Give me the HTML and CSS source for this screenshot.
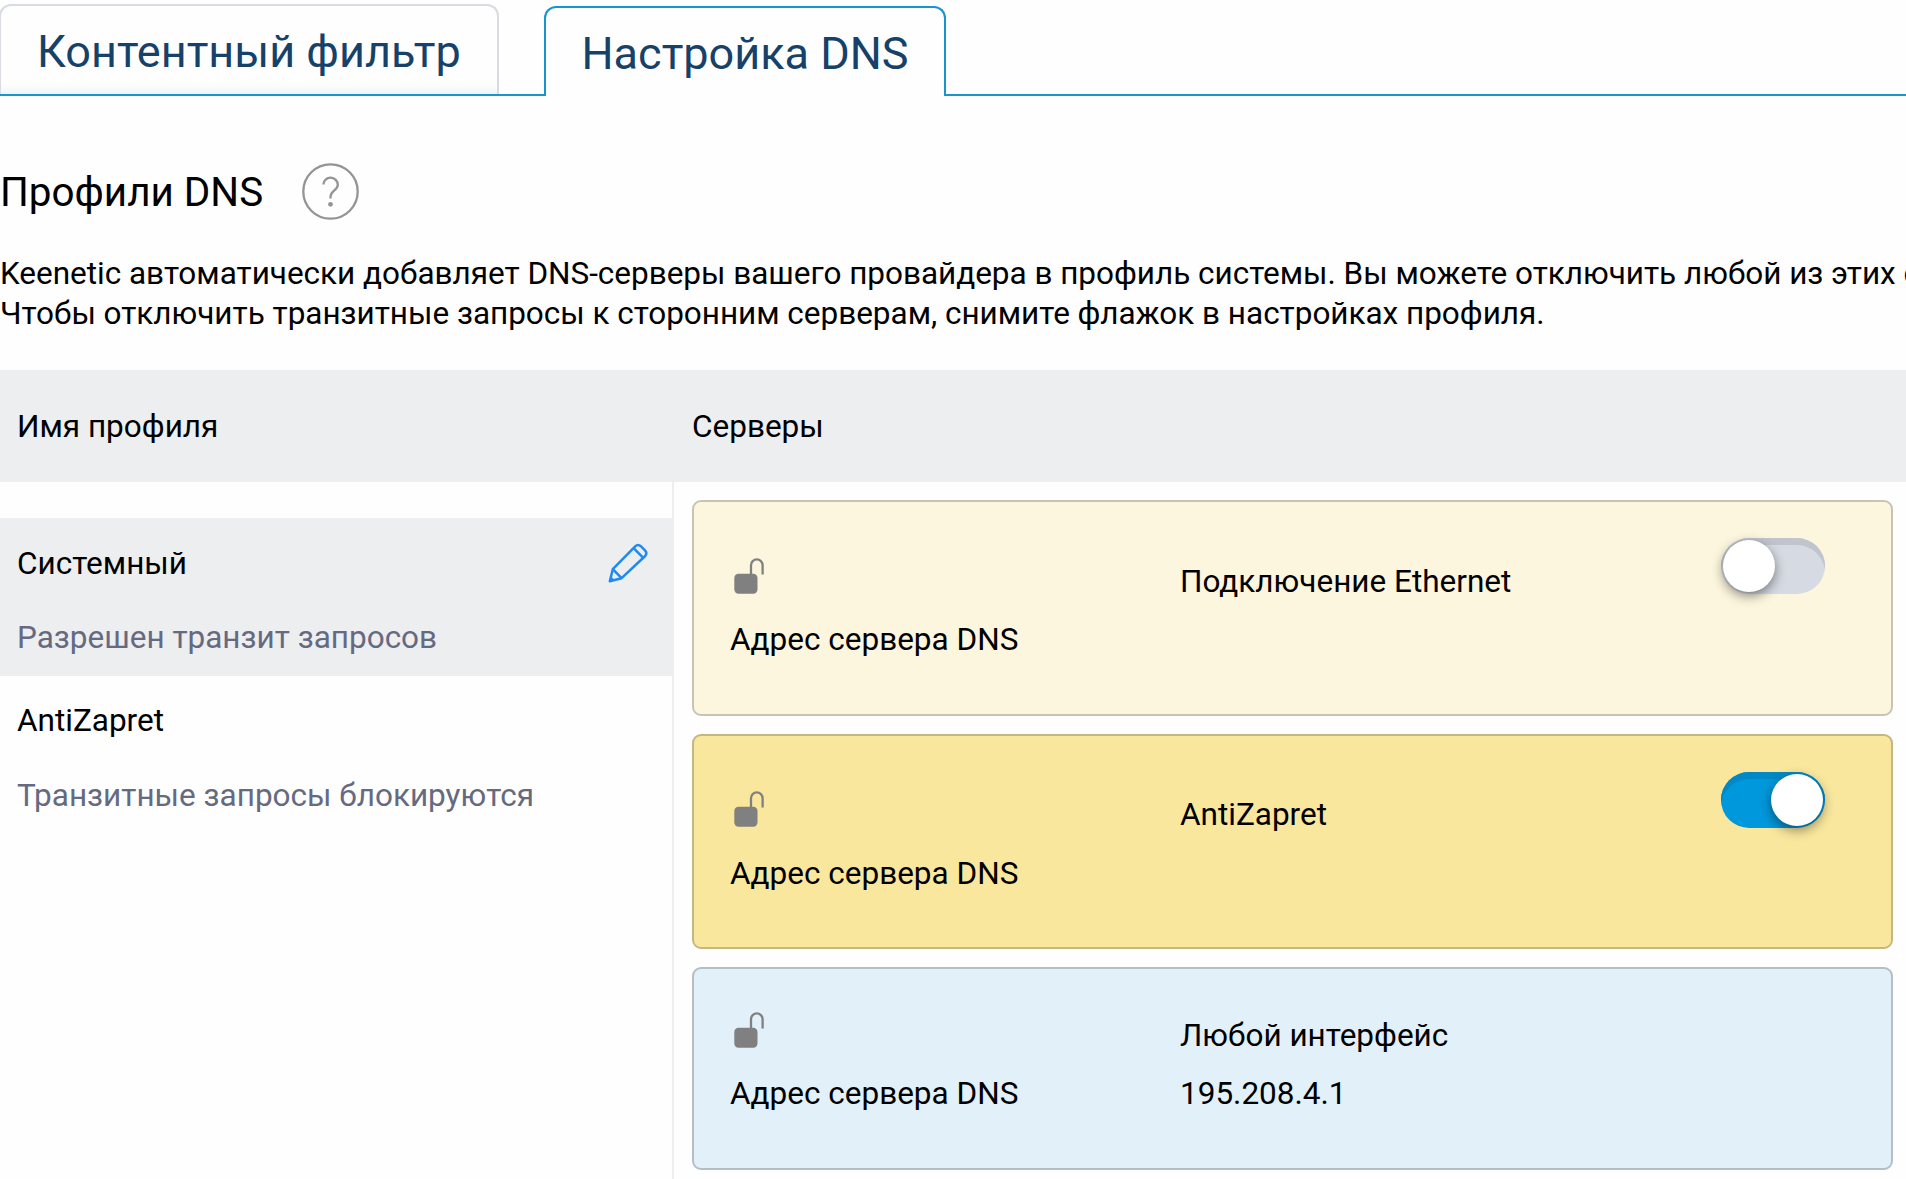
FILE: index.html
```html
<!DOCTYPE html>
<html lang="ru">
<head>
<meta charset="utf-8">
<title>Настройка DNS</title>
<link rel="stylesheet" href="styles.css">
</head>
<body>
<svg class="sprite" aria-hidden="true">
  <symbol id="unlock" viewBox="0 0 30 36">
    <path d="M17 16V7.2a5.8 5.8 0 0 1 11.6 0V16.4" fill="none" stroke="#808080" stroke-width="2.3"/>
    <rect x="0.3" y="15.7" width="23.2" height="20" rx="4.2" fill="#808080"/>
  </symbol>
</svg>
<nav class="tabs">
  <a class="tab tab-first">Контентный фильтр</a>
  <a class="tab tab-active">Настройка DNS</a>
</nav>
<main>
  <header class="heading">
    <h1 class="title">Профили DNS</h1>
    <svg class="help" viewBox="0 0 57 57" fill="none" stroke="#949494">
      <circle cx="28.5" cy="28.5" r="27.2" stroke-width="2.3"/>
      <path d="M21.4 21.6a7.2 7 0 0 1 14.4 .2c0 5.8-7.3 5.6-7.3 12.2v1.4" stroke-width="2.3"/>
      <circle cx="28.5" cy="41.3" r="2.4" fill="#949494" stroke="none"/>
    </svg>
  </header>
  <p class="intro">Keenetic автоматически добавляет DNS-серверы вашего провайдера в профиль системы. Вы можете отключить любой из этих с<br>Чтобы отключить транзитные запросы к сторонним серверам, снимите флажок в настройках профиля.</p>
  <div class="table-head"><span>Имя профиля</span><span>Серверы</span></div>
  <div class="table-body">
    <section class="profiles">
      <article class="profile profile-selected">
        <div class="profile-row">
          <h2 class="profile-name">Системный</h2>
          <svg class="edit" viewBox="0 0 40 40" fill="none" stroke="#1f8af2" stroke-width="2.5" stroke-linejoin="round">
            <path d="M1.8 38.2 4.8 26.2 27.2 3.4a4.2 4.2 0 0 1 5.6-.2l4.4 4.4a4.2 4.2 0 0 1 0 5.4L13.6 35.2Z"/>
            <path d="M25.6 5.2l9.4 9.4M4.8 26.2l8.8 9"/>
            <path d="M2.8 33.2l4.2 4-5.6 1.4Z" fill="#1f8af2" stroke="none"/>
          </svg>
        </div>
        <p class="profile-note">Разрешен транзит запросов</p>
      </article>
      <article class="profile">
        <div class="profile-row"><h2 class="profile-name">AntiZapret</h2></div>
        <p class="profile-note">Транзитные запросы блокируются</p>
      </article>
    </section>
    <section class="servers">
      <article class="card card-pale">
        <svg class="lock"><use href="#unlock"/></svg>
        <span class="cell">Подключение Ethernet</span>
        <span class="toggle"></span>
        <span class="label">Адрес сервера DNS</span>
      </article>
      <article class="card card-yellow">
        <svg class="lock"><use href="#unlock"/></svg>
        <span class="cell">AntiZapret</span>
        <span class="toggle toggle-on"></span>
        <span class="label">Адрес сервера DNS</span>
      </article>
      <article class="card card-blue">
        <svg class="lock"><use href="#unlock"/></svg>
        <span class="cell">Любой интерфейс</span>
        <span class="label">Адрес сервера DNS</span>
        <span class="address">195.208.4.1</span>
      </article>
    </section>
  </div>
</main>
</body>
</html>
```
FILE: styles.css
```css
* { box-sizing: border-box; }
body {
  margin: 0;
  height: 1179px;
  overflow: hidden;
  background: #fefefe;
  color: #000;
  font: 31.5px/40px Roboto, sans-serif;
}
h1, h2, p { margin: 0; font-weight: 400; }
.sprite { position: absolute; width: 0; height: 0; }
.tabs {
  display: flex;
  align-items: flex-end;
  height: 96px;
  box-shadow: inset 0 -2px #1795cd;
}
.tab {
  border: 2px solid #d8dbe2;
  border-bottom: 0;
  border-radius: 12px 12px 0 0;
  color: #164168;
  font-size: 45px;
  line-height: 56px;
  white-space: nowrap;
}
.tab-first {
  width: 500px;
  height: 90px;
  margin: 0 45px 2px -1px;
  padding: 18px 0 0 36px;
  background: linear-gradient(to top, #eef5f8, #fefefe 10px);
}
.tab-active {
  width: 402px;
  height: 90px;
  padding: 18px 0 0 35.5px;
  border-color: #1795cd;
  background: #fefefe;
}
.heading {
  display: flex;
  align-items: center;
  gap: 39px;
  padding-top: 67px;
}
.title { padding-top: 2px; font-size: 40.4px; line-height: 55px; }
.help { width: 57px; height: 57px; }
.intro {
  margin-top: 34px;
  letter-spacing: -.02px;
  white-space: nowrap;
}
.table-head {
  display: grid;
  grid-template-columns: 675px 1fr;
  height: 112px;
  margin-top: 36px;
  align-items: center;
  padding: 4px 0 0 17px;
  background: #edeef0;
  border-bottom: 2px solid #eee;
}
.table-body { display: flex; height: 720px; }
.profiles {
  width: 674px;
  padding-top: 36px;
  border-right: 2px solid #eee;
}
.profile { height: 158px; padding: 25px 0 0 17px; }
.profile-selected { background: #edeef0; }
.profile-row {
  display: flex;
  justify-content: space-between;
  height: 75px;
  padding-right: 24.5px;
}
.profile-name { font-size: inherit; }
.profile-selected .profile-name { padding-top: 1px; }
.edit { width: 40px; height: 40px; }
.profile-note { color: #656a80; }
.servers {
  display: flex;
  flex-direction: column;
  gap: 18px;
  padding: 18px 0 0 18px;
}
.card {
  display: grid;
  grid-template-columns: 450px 541px 104px;
  grid-template-rows: 82px 40px;
  width: 1201px;
  height: 216px;
  padding: 36px 0 0 36px;
  border: 2px solid #c8c4b2;
  border-radius: 9px;
}
.card-pale { background: #fcf6de; }
.card-yellow { height: 215px; background: #f9e79d; border-color: #c3b883; }
.card-blue {
  grid-template-rows: 69px 40px;
  height: 203px;
  background: #e2f0fa;
  border-color: #b3bec7;
}
.lock { width: 30px; height: 36px; margin: 20px 0 0 4px; }
.cell { padding-top: 24px; }
.card-yellow .cell { padding-top: 23px; }
.card-yellow .lock { margin-top: 19px; }
.card-blue .lock { margin-top: 7px; }
.card-blue .cell { padding-top: 11px; }
.label { grid-column: 1; grid-row: 2; }
.address { grid-column: 2; grid-row: 2; }
.toggle {
  width: 104px;
  height: 56px;
  padding: 2px;
  border-radius: 28px;
  background: #d6dae2;
  box-shadow: inset 0 7px #c0c4cc;
}
.toggle::after {
  content: "";
  display: block;
  width: 52px;
  height: 52px;
  border-radius: 50%;
  background: #fff;
  box-shadow: 0 4px 12px rgba(0, 0, 0, .45);
}
.toggle-on { background: #0098dc; box-shadow: inset 0 7px #0089c6; }
.toggle-on::after { margin-left: 48px; }
```
